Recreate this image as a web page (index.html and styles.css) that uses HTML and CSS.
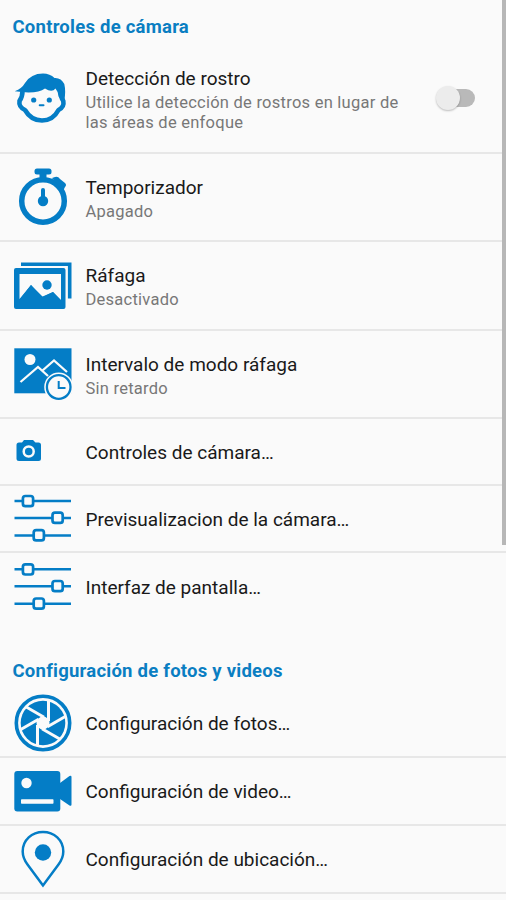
FILE: index.html
```html
<!DOCTYPE html>
<html lang="es">
<head>
<meta charset="utf-8">
<title>Controles de cámara</title>
<link rel="stylesheet" href="styles.css">
</head>
<body>
<main class="settings">
  <h2 class="section section-first">Controles de cámara</h2>
  <div class="row row-tall">
    <svg class="icon" viewBox="0 44 80 108">
      <path class="line" stroke-width="4.600" stroke-linejoin="round" d="M22.500 91Q22.500 97 19.500 101Q18.500 107 25 110Q31 120.500 42 120.500Q53 120.500 58.500 110Q64.500 107 63.300 101Q60.500 97 60.500 91"/>
      <path d="M14.700 91.300Q22 88.500 25 83Q31 73.500 43 73.500Q50 73.500 54.500 78Q61 77.500 64.300 84Q66 91 64.300 101L58.800 97Q58.500 92 55.500 88.500Q52 93 45 88.500Q37 94.500 14.700 91.300Z"/>
      <circle cx="33.700" cy="100" r="2.600"/><circle cx="49.300" cy="100" r="2.600"/>
      <path class="line" stroke-width="2" stroke-linecap="round" d="M39.700 105.300H43.500"/>
    </svg>
    <div class="text"><div class="title">Detección de rostro</div><div class="sub">Utilice la detección de rostros en lugar de<br>las áreas de enfoque</div></div>
    <div class="switch"><div class="thumb"></div></div>
  </div>
  <div class="row row-two">
    <svg class="icon" viewBox="0 154 80 86">
      <circle class="line" cx="43" cy="201" r="21.300" stroke-width="5.500"/>
      <rect x="34.500" y="168.500" width="17" height="6" rx="2.500"/><rect x="39.500" y="173" width="7" height="6"/>
      <path d="M52 178L55 177Q58 176 60 179L65 183Q67 185 65 187L63 191Z"/>
      <circle cx="43" cy="201" r="5.200"/><path class="line" stroke-width="4" stroke-linecap="round" d="M43 190V200"/>
    </svg>
    <div class="text"><div class="title">Temporizador</div><div class="sub">Apagado</div></div>
  </div>
  <div class="row row-two row-burst">
    <svg class="icon" viewBox="0 242 80 87">
      <path class="line" stroke-width="3.600" d="M21 264.200H69.700V298.500"/>
      <rect x="14" y="268" width="51.500" height="41" rx="2"/>
      <path class="paper" d="M19.500 274H61V300L53 292L43 297L31 285L19.500 299Z"/>
      <path d="M19.500 300L31 285L41.500 297L53 292L61 300.500V303H19.500Z"/><circle cx="47" cy="285" r="4.700"/>
    </svg>
    <div class="text"><div class="title">Ráfaga</div><div class="sub">Desactivado</div></div>
  </div>
  <div class="row row-two">
    <svg class="icon" viewBox="0 331 80 86">
      <rect x="14.300" y="348.300" width="57.200" height="45"/>
      <circle class="paper" cx="30" cy="359.500" r="5.500"/>
      <path class="cut" stroke-width="2.300" d="M20.500 382L38 367L48 376M42.500 370.500L54 360.500L67 372"/>
      <circle class="paper" cx="58.700" cy="387" r="14.500"/><circle class="line" cx="58.700" cy="387" r="11.800" stroke-width="2.300"/>
      <path class="line" stroke-width="2" d="M58.700 381V388H65.500"/>
    </svg>
    <div class="text"><div class="title">Intervalo de modo ráfaga</div><div class="sub">Sin retardo</div></div>
  </div>
  <div class="row row-camera">
    <svg class="icon" viewBox="0 419 80 65">
      <path d="M19 442.500H22L24 440H33L35.500 442.500H38.500Q41 442.500 41 445V458.500Q41 461 38.500 461H19Q16.500 461 16.500 458.500V445Q16.500 442.500 19 442.500Z"/>
      <circle class="cut" cx="28.700" cy="451.500" r="5" stroke-width="2.500"/>
    </svg>
    <div class="text"><div class="title">Controles de cámara…</div></div>
  </div>
  <div class="row row-preview">
    <svg class="icon" viewBox="0 486 80 65">
      <path class="line" stroke-width="2.500" d="M14.500 501H71M14.500 518H71M14.500 535.500H71"/>
      <g class="knob"><rect x="22.900" y="496" width="10.200" height="10.200" rx="2.500"/><rect x="52.500" y="512.700" width="10.200" height="10.200" rx="2.500"/><rect x="33.700" y="530.200" width="10.200" height="10.200" rx="2.500"/></g>
    </svg>
    <div class="text"><div class="title">Previsualizacion de la cámara…</div></div>
  </div>
  <div class="row row-one row-last">
    <svg class="icon" viewBox="0 553 80 68">
      <path class="line" stroke-width="2.500" d="M14.500 569.300H71M14.500 586.300H71M14.500 603.800H71"/>
      <g class="knob"><rect x="22.900" y="564.300" width="10.200" height="10.200" rx="2.500"/><rect x="52.500" y="581" width="10.200" height="10.200" rx="2.500"/><rect x="33.700" y="598.500" width="10.200" height="10.200" rx="2.500"/></g>
    </svg>
    <div class="text"><div class="title">Interfaz de pantalla…</div></div>
  </div>
  <h2 class="section section-second">Configuración de fotos y videos</h2>
  <div class="row row-one">
    <svg class="icon" viewBox="-43 -33 80 66">
      <circle class="line" r="26.700" stroke-width="3.600"/><circle r="22.300"/>
      <circle class="paper" r="6.500"/>
      <g class="cut" stroke-width="3">
        <path id="blade" d="M5.500 -23V-2"/>
        <use href="#blade" transform="rotate(60)"/><use href="#blade" transform="rotate(120)"/><use href="#blade" transform="rotate(180)"/><use href="#blade" transform="rotate(240)"/><use href="#blade" transform="rotate(300)"/>
      </g>
    </svg>
    <div class="text"><div class="title">Configuración de fotos…</div></div>
  </div>
  <div class="row row-one">
    <svg class="icon" viewBox="0 758 80 66">
      <rect x="14.300" y="771" width="46" height="40.500" rx="3"/>
      <path d="M60 783L69.500 776Q71.500 775 71.500 777V804.500Q71.500 806.500 69.500 805.500L60 799Z"/>
      <circle class="paper" cx="26.500" cy="783" r="5.200"/><rect class="paper" x="21" y="799.300" width="32.500" height="4.400" rx=".7"/>
    </svg>
    <div class="text"><div class="title">Configuración de video…</div></div>
  </div>
  <div class="row row-one">
    <svg class="icon" viewBox="0 826 80 66">
      <path class="line" stroke-width="2.500" d="M43 885.500L27.500 864.500Q22.700 858 22.700 851.500C22.700 840 32 832 43 832S63.300 840 63.300 851.500Q63.300 858 58.500 864.500Z"/>
      <circle cx="43" cy="852.500" r="8.200"/>
    </svg>
    <div class="text"><div class="title">Configuración de ubicación…</div></div>
  </div>
  <div class="scrollbar"></div>
</main>
</body>
</html>
```
FILE: styles.css
```css
* { box-sizing: border-box; }
body { margin: 0; background: #fafafa; font-family: Roboto, sans-serif; }
.settings { position: relative; width: 506px; height: 900px; overflow: hidden; }
.section { margin: 0; padding-left: 12.5px; font-size: 18.5px; line-height: 22px; font-weight: 700; color: #0a7ec2; letter-spacing: .24px; white-space: nowrap; }
.section-first { height: 44px; padding-top: 16px; }
.section-second { height: 69px; padding-top: 39px; }
.row { display: flex; align-items: center; border-bottom: 2px solid #e7e7e7; padding-right: 31px; }
.row-tall { height: 110px; }
.row-two { height: 88px; }
.row-burst { height: 89px; }
.row-camera { height: 67px; }
.row-preview { height: 67px; }
.row-one { height: 68px; }
.row-last { border-bottom: 0; }
.icon { width: 80px; height: 100%; flex: none; fill: #047dc6; }
.line { fill: none; stroke: #047dc6; }
.paper { fill: #fafafa; }
.cut { fill: none; stroke: #fafafa; }
.knob { fill: #fafafa; stroke: #047dc6; stroke-width: 2.7; }
.text { flex: 1; padding-left: 5.5px; padding-top: 1px; white-space: nowrap; }
.title { font-size: 19px; line-height: 25px; color: #191919; }
.sub { font-size: 16.5px; line-height: 20px; color: #777; letter-spacing: .25px; padding-top: 2px; margin-bottom: -1px; }
.switch { width: 36px; height: 18px; border-radius: 9px; background: #b9b9b9; display: flex; align-items: center; flex: none; }
.thumb { width: 24px; height: 24px; border-radius: 50%; background: #ececec; margin-left: -3px; flex: none; box-shadow: 0 1px 2px rgba(0,0,0,.25); }
.scrollbar { position: absolute; top: 0; right: 0; width: 4px; height: 545px; background: #b7b7b7; }
```
